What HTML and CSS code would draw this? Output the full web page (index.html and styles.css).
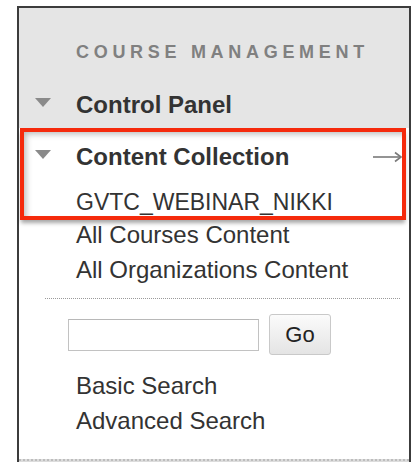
FILE: index.html
```html
<!DOCTYPE html>
<html lang="en">
<head>
<meta charset="utf-8">
<title>Course Management</title>
<link rel="stylesheet" href="styles.css">
</head>
<body>
<div class="panel">
  <div class="panel-head">
    <h2 class="panel-title">COURSE MANAGEMENT</h2>
    <div class="nav-row">
      <span class="caret"></span>
      <span class="nav-label">Control Panel</span>
    </div>
  </div>

  <div class="callout">
    <div class="nav-row nav-row--open">
      <span class="caret"></span>
      <span class="nav-label">Content Collection</span>
      <svg class="go-arrow" width="29" height="12" viewBox="0 0 29 12">
        <path d="M0 6 H27.5" stroke="#7a7a7a" stroke-width="1.6" fill="none"/>
        <path d="M22 1.5 L28 6 L22 10.5" stroke="#7a7a7a" stroke-width="1.6" fill="none"/>
      </svg>
    </div>
    <a class="sub-link sub-link--current" href="#">GVTC_WEBINAR_NIKKI</a>
  </div>

  <ul class="link-list link-list--tight">
    <li><a class="sub-link" href="#">All Courses Content</a></li>
    <li><a class="sub-link" href="#">All Organizations Content</a></li>
  </ul>

  <div class="divider"></div>

  <form class="search" onsubmit="return false">
    <input class="search-input" type="text" aria-label="Search">
    <button class="search-btn" type="submit">Go</button>
  </form>

  <ul class="link-list link-list--search">
    <li><a class="sub-link" href="#">Basic Search</a></li>
    <li><a class="sub-link" href="#">Advanced Search</a></li>
  </ul>

  <div class="panel-foot"></div>
</div>
</body>
</html>
```

FILE: styles.css
```css
* {
  box-sizing: border-box;
}

html, body {
  margin: 0;
  padding: 0;
  background: #ffffff;
  font-family: "Liberation Sans", Arial, Helvetica, sans-serif;
  color: #333333;
}

.panel {
  margin: 6px 0 0 17px;
  width: 394px;
  border: 2px solid #3c3c3c;
  border-bottom: none;
  background: #ffffff;
}

/* grey header block: section title + collapsed item */
.panel-head {
  background: #e5e5e5;
  padding: 30px 0 4px 0;
}

.panel-title {
  margin: 0;
  padding-left: 57px;
  height: 28px;
  line-height: 28px;
  font-size: 18px;
  font-weight: bold;
  letter-spacing: 4.7px;
  color: #808080;
  white-space: nowrap;
}

.nav-row {
  display: flex;
  align-items: center;
  height: 38px;
  margin-top: 20px;
  padding-left: 16px;
}

.caret {
  width: 0;
  height: 0;
  border-left: 8px solid transparent;
  border-right: 8px solid transparent;
  border-top: 9px solid #8a8a8a;
  margin-right: 25px;
  margin-bottom: 6px;
  flex: none;
}

.nav-label {
  font-size: 24px;
  font-weight: bold;
  color: #333333;
  white-space: nowrap;
}

/* red highlight frame around the open item */
.callout {
  margin: 0 3px 0 1px;
  border: 4px solid #f52a0c;
  padding-top: 10px;
  background: #ffffff;
  box-shadow: 0 4px 4px -1px rgba(0, 0, 0, 0.35),
              inset 4px 4px 6px -2px rgba(0, 0, 0, 0.28);
}

.nav-row--open {
  height: 30px;
  margin-top: 0;
  padding-left: 11px;
}

.go-arrow {
  margin-left: auto;
  flex: none;
}

.sub-link {
  display: block;
  font-size: 24px;
  color: #333333;
  text-decoration: none;
  white-space: nowrap;
}

.sub-link--current {
  margin-top: 16px;
  height: 28px;
  line-height: 28px;
  padding-left: 52px;
  font-size: 23px;
}

.link-list {
  list-style: none;
  margin: 0;
  padding: 0 0 0 57px;
  display: flex;
  flex-direction: column;
  gap: 9px;
}

.link-list .sub-link {
  height: 26px;
  line-height: 26px;
}

.link-list--tight {
  margin-top: 2px;
}

.divider {
  margin: 15px 9px 0 26px;
  border-top: 1px dotted #9a9a9a;
}

.search {
  display: flex;
  align-items: center;
  gap: 10px;
  margin: 15px 0 0 0;
  padding-left: 49px;
}

.search-input {
  width: 191px;
  height: 32px;
  margin: 0;
  border: 1px solid #c2c2c2;
  border-top-color: #b8b8b8;
  background: #ffffff;
  padding: 0 6px;
  font-size: 18px;
  outline: none;
}

.search-btn {
  width: 62px;
  height: 41px;
  margin: 0;
  padding: 0;
  border: 1px solid #c9c9c9;
  border-radius: 3px;
  background: linear-gradient(#fbfbfb, #e4e4e4);
  font-family: "Liberation Sans", Arial, Helvetica, sans-serif;
  font-size: 22px;
  color: #222222;
}

.link-list--search {
  margin-top: 18px;
}

.panel-foot {
  margin-top: 25px;
  height: 4px;
  background: #dcdcdc;
  border-top: 2px dotted #bdbdbd;
}
```
